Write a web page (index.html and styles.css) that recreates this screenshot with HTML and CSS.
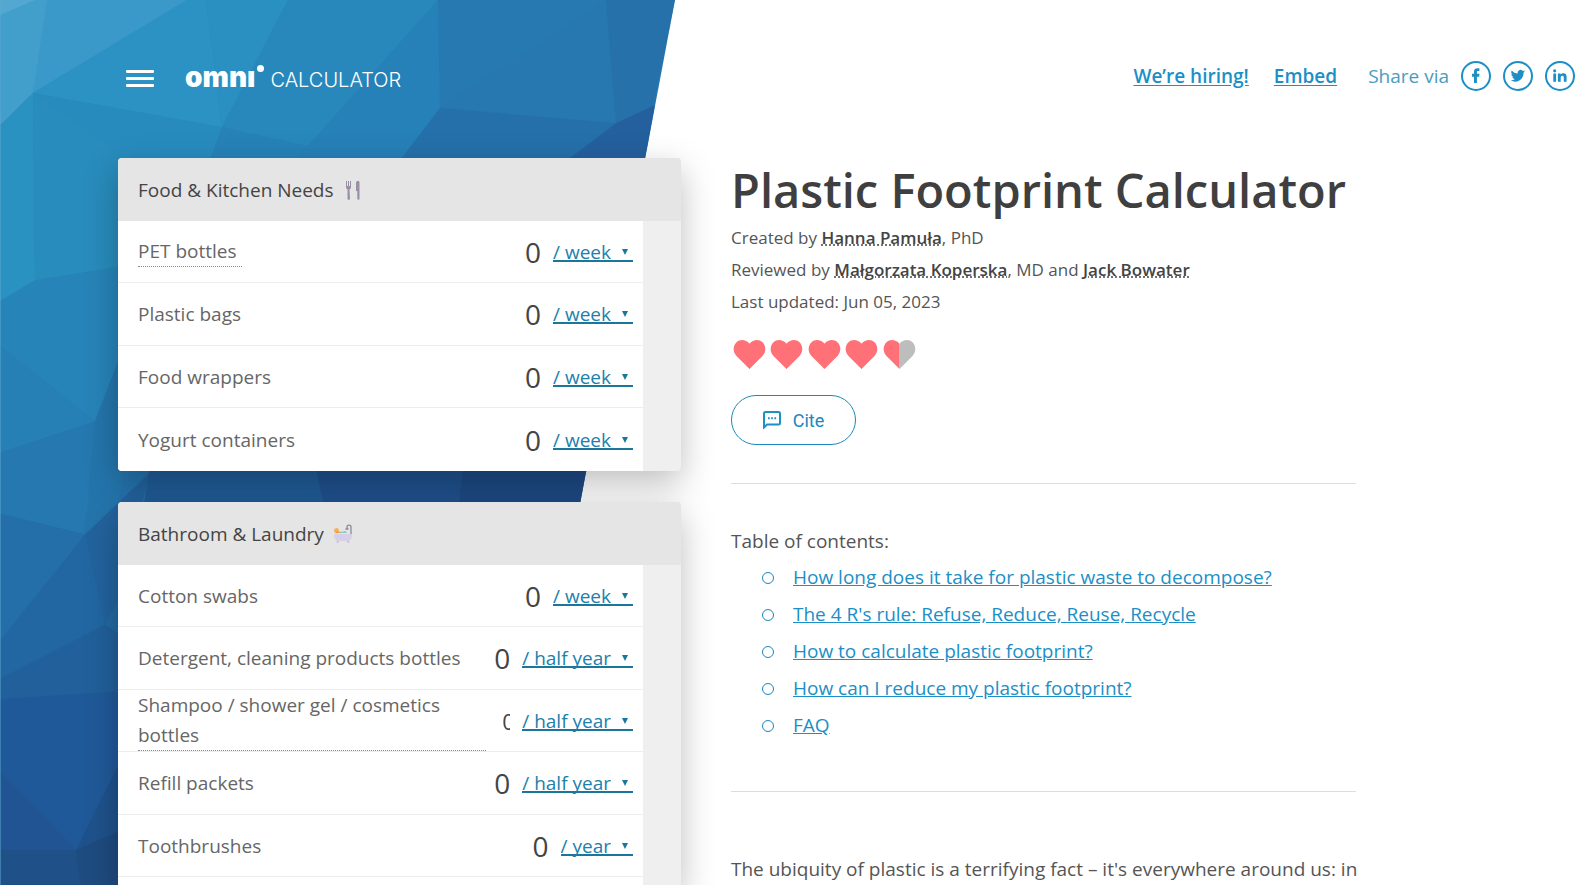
FILE: index.html
```html
<!DOCTYPE html>
<html lang="en">

<head>
  <meta charset="utf-8" />
  <meta name="viewport" content="width=device-width, initial-scale=1" />
  <title>Plastic Footprint Calculator</title>
  <link rel="stylesheet" href="styles.css">
</head>

<body>
  <svg class="backdrop" viewBox="0 0 675 885" preserveAspectRatio="none" aria-hidden="true">
    <defs>
      <linearGradient id="sky" x1="0" y1="0" x2="0.5" y2="1">
        <stop offset="0" stop-color="#2b93c2" />
        <stop offset="0.45" stop-color="#2577b0" />
        <stop offset="1" stop-color="#1f4c83" />
      </linearGradient>
      <clipPath id="slope"><path d="M0 0H675L508 885H0Z" /></clipPath>
    </defs>
    <g clip-path="url(#slope)">
      <rect width="675" height="885" fill="url(#sky)" />
      <path fill="#3a99c9" d="M0 0H187L33 93L0 125Z" />
      <path fill="#429fcc" d="M0 0H47L33 93L0 125Z" />
      <path fill="#52a8d1" d="M0 0H35L0 15Z" />
      <path fill="#2b92c3" d="M187 0H206L222 127L33 93Z" />
      <path fill="#2990c1" d="M206 0H288L222 127Z" />
      <path fill="#2888bb" d="M288 0H438L308 146L222 127Z" />
      <path fill="#2681b8" d="M438 0L440 108L400 160H298L308 146Z" />
      <path fill="#2779b2" d="M438 0H606L440 108Z" />
      <path fill="#2777b0" d="M606 0L616 123L440 108Z" />
      <path fill="#2671aa" d="M606 0H675L652 110L616 123Z" />
      <path fill="#2570aa" d="M440 108L616 123L567 160H400Z" />
      <path fill="#24609e" d="M616 123L655 105L645 160H567Z" />
      <path fill="#288bbe" d="M222 127L33 93L118 160H210Z" />
      <path fill="#2682b7" d="M222 127L308 146L298 160H210Z" />
      <path fill="#2a92c1" d="M0 125L33 93L35 280L0 301Z" />
      <path fill="#288cbc" d="M33 93L130 160V265L35 280Z" />
      <path fill="#2784b8" d="M35 280L130 265V330L95 421L0 345V301Z" />
      <path fill="#2780b5" d="M0 345L95 421L0 452Z" />
      <path fill="#2475ac" d="M95 421L130 330V430L118 507L85 534Z" />
      <path fill="#2578b0" d="M0 452L95 421L85 534L0 513Z" />
      <path fill="#246fa9" d="M0 513L85 534L0 640Z" />
      <path fill="#2267a2" d="M85 534L105 624L0 678V640Z" />
      <path fill="#22639e" d="M85 534L150 472L118 600L105 624Z" />
      <path fill="#21609b" d="M0 678L105 624L130 640V690L0 698Z" />
      <path fill="#205999" d="M0 698L130 690V755L76 849L0 770Z" />
      <path fill="#205493" d="M0 770L76 849H0Z" />
      <path fill="#1f528c" d="M76 849L130 740V825Z" />
      <path fill="#1f5087" d="M0 849H76L80 885H0Z" />
      <path fill="#1e4b80" d="M76 849L130 825V885H80Z" />
      <path fill="#205c98" d="M150 465H315L325 510H143Z" />
      <path fill="#1f518d" d="M315 465H463L458 510H325Z" />
      <path fill="#1e4a84" d="M463 465H590L580 510H458Z" />
      <path stroke="#5fa7d0" d="M0 0V885" />
    </g>
  </svg>

  <header class="top">
    <div class="brand">
      <button type="button" class="menu" aria-label="Menu"><span></span><span></span><span></span></button>
      <a href="#" class="logo" aria-label="Omni Calculator">
        <span class="omni">omnı</span><i class="dot"></i><span class="calc">CALCULATOR</span>
      </a>
    </div>
    <nav class="links">
      <a href="#" class="strong">We’re hiring!</a>
      <a href="#" class="strong">Embed</a>
      <div class="share">
        <span>Share via</span>
        <a href="#" aria-label="Facebook">
          <svg viewBox="0 0 30 30"><circle cx="15" cy="15" r="14" /><path d="M13 22v-6.300H11v-2.900h2v-1.900c0-2.500 1.400-3.600 3.500-3.600.9 0 1.700.1 1.900.1v2.600h-1.300c-1 0-1.200.5-1.200 1.200v1.600h2.600l-.4 2.900h-2.200V22z" /></svg>
        </a>
        <a href="#" aria-label="Twitter">
          <svg viewBox="0 0 30 30"><circle cx="15" cy="15" r="14" /><path d="M22 10.300a6 6 0 0 1-1.700.5 3 3 0 0 0 1.300-1.600 6 6 0 0 1-1.900.7 2.900 2.900 0 0 0-5 2.700 8.300 8.300 0 0 1-6-3.100 2.900 2.900 0 0 0 .9 3.900 3 3 0 0 1-1.300-.4 2.900 2.900 0 0 0 2.300 2.900 3 3 0 0 1-1.300.1 2.900 2.900 0 0 0 2.700 2A5.900 5.900 0 0 1 7.700 19.200 8.300 8.300 0 0 0 20.500 11.800 6 6 0 0 0 22 10.300z" /></svg>
        </a>
        <a href="#" aria-label="LinkedIn">
          <svg viewBox="0 0 30 30"><circle cx="15" cy="15" r="14" /><path d="M8.300 12.500h2.800V20.800H8.300zM9.700 8.200a1.600 1.600 0 1 1 0 3.200 1.600 1.600 0 0 1 0-3.200zM12.900 12.500h2.700v1.200c.5-.8 1.400-1.400 2.700-1.400 2.600 0 3.300 1.600 3.300 4v4.500h-2.800v-4.100c0-1.100-.2-2-1.400-2-1.300 0-1.700.9-1.700 2.100v4h-2.800z" /></svg>
        </a>
      </div>
    </nav>
  </header>

  <main class="main">
    <form class="calculator">
      <section class="card">
        <h2>Food &amp; Kitchen Needs
          <svg class="emoji" viewBox="0 0 20 20" fill="#9a8fa3"><path d="M3 1h1v5h1V1h1v5h1V1h1v6c0 1-.5 2-1.500 2.300L7 19c0 1-2.500 1-2.500 0L4.500 9.300C3.500 9 3 8 3 7zM13 19V3c0-1.500 1-2.200 2-2.200s1.500.7 1.500 2.200v16c0 1-2 1-2.200 0v-8H13z" /></svg>
        </h2>
        <div class="rows">
          <div class="row">
            <label for="pet" class="hint">PET bottles</label>
            <input id="pet" class="value" value="0" />
            <span class="unit"><select aria-label="PET bottles unit"><option>/ week</option><option>/ month</option><option>/ year</option></select></span>
          </div>
          <div class="row">
            <label for="bags">Plastic bags</label>
            <input id="bags" class="value" value="0" />
            <span class="unit"><select aria-label="Plastic bags unit"><option>/ week</option><option>/ month</option><option>/ year</option></select></span>
          </div>
          <div class="row">
            <label for="wrappers">Food wrappers</label>
            <input id="wrappers" class="value" value="0" />
            <span class="unit"><select aria-label="Food wrappers unit"><option>/ week</option><option>/ month</option><option>/ year</option></select></span>
          </div>
          <div class="row">
            <label for="yogurt">Yogurt containers</label>
            <input id="yogurt" class="value" value="0" />
            <span class="unit"><select aria-label="Yogurt containers unit"><option>/ week</option><option>/ month</option><option>/ year</option></select></span>
          </div>
        </div>
      </section>

      <section class="card last">
        <h2>Bathroom &amp; Laundry
          <svg class="emoji" viewBox="0 0 20 20"><path fill="#d7cfe6" d="M1 10h18c0 4-1 6-3 7H4c-2-1-3-3-3-7z" /><path fill="#c8bfda" d="M4 17h2l-1 2H3.500zM14 17h2l.5 2H15z" /><path fill="#8fc9c4" d="M6 8.500c2-2 3 0 4.500-1s2.500-.5 3.500 1.500H6z" /><circle cx="3.500" cy="6.500" r="2.500" fill="#f2b25c" /><path fill="#e89a45" d="M4 7l4 2H2z" /><path fill="none" stroke="#8d8894" stroke-width="1.300" d="M18 10V3c0-2.500-4-2.500-4 0v1.500M12.500 5h3" /></svg>
        </h2>
        <div class="rows">
          <div class="row">
            <label for="swabs">Cotton swabs</label>
            <input id="swabs" class="value" value="0" />
            <span class="unit"><select aria-label="Cotton swabs unit"><option>/ week</option><option>/ month</option><option>/ year</option></select></span>
          </div>
          <div class="row">
            <label for="detergent">Detergent, cleaning products bottles</label>
            <input id="detergent" class="value" value="0" />
            <span class="unit"><select aria-label="Detergent unit"><option>/ half year</option><option>/ month</option><option>/ year</option></select></span>
          </div>
          <div class="row">
            <label for="shampoo" class="hint wide">Shampoo / shower gel / cosmetics bottles</label>
            <input id="shampoo" class="value squeezed" value="0" />
            <span class="unit"><select aria-label="Shampoo unit"><option>/ half year</option><option>/ month</option><option>/ year</option></select></span>
          </div>
          <div class="row">
            <label for="refill">Refill packets</label>
            <input id="refill" class="value" value="0" />
            <span class="unit"><select aria-label="Refill packets unit"><option>/ half year</option><option>/ month</option><option>/ year</option></select></span>
          </div>
          <div class="row">
            <label for="brushes">Toothbrushes</label>
            <input id="brushes" class="value" value="0" />
            <span class="unit"><select aria-label="Toothbrushes unit"><option>/ year</option><option>/ month</option><option>/ week</option></select></span>
          </div>
        </div>
      </section>
    </form>

    <article class="article">
      <h1>Plastic Footprint Calculator</h1>
      <div class="meta">
        <div>Created by <a href="#">Hanna Pamuła</a>, PhD</div>
        <div>Reviewed by <a href="#">Małgorzata Koperska</a>, MD and <a href="#">Jack Bowater</a></div>
        <div>Last updated: Jun 05, 2023</div>
      </div>
      <svg class="hearts" viewBox="0 0 187 32" role="img" aria-label="Rating 4.5 of 5">
        <defs>
          <linearGradient id="half"><stop offset="0.5" stop-color="#ff7077" /><stop offset="0.5" stop-color="#bdbdbd" /></linearGradient>
          <path id="heart" d="M18.500 31L5.500 18C1.500 14 2 7.500 5.500 4.300 9 .8 15 1.400 18.500 5.800 22 1.400 28 .8 31.500 4.300 35 7.500 35.500 14 31.500 18z" />
        </defs>
        <g fill="#ff7077"><use href="#heart" /><use href="#heart" x="37" /><use href="#heart" x="75" /><use href="#heart" x="112" /></g>
        <use href="#heart" x="150" fill="url(#half)" />
      </svg>
      <button type="button" class="cite">
        <svg viewBox="0 0 18 18"><path d="M1 16.500V2.500Q1 1 2.500 1H15.500Q17 1 17 2.500V12Q17 13.500 15.500 13.500H4z" /><path class="dots" d="M5 7.300h1.700M8.200 7.300h1.700M11.400 7.300h1.700" /></svg>
        Cite
      </button>
      <nav class="toc">
        <p>Table of contents:</p>
        <ul>
          <li><a href="#">How long does it take for plastic waste to decompose?</a></li>
          <li><a href="#">The 4 R's rule: Refuse, Reduce, Reuse, Recycle</a></li>
          <li><a href="#">How to calculate plastic footprint?</a></li>
          <li><a href="#">How can I reduce my plastic footprint?</a></li>
          <li><a href="#">FAQ</a></li>
        </ul>
      </nav>
      <p class="intro">The ubiquity of plastic is a terrifying fact – it's everywhere around us: in</p>
    </article>
  </main>
</body>

</html>
```
FILE: styles.css
```css
* {
  box-sizing: border-box;
}

body {
  margin: 0;
  min-height: 100vh;
  display: flex;
  flex-direction: column;
  position: relative;
  background: #fff;
  color: #555;
  font-family: "Open Sans", "Noto Sans", sans-serif;
  font-size: 19px;
}

h1, h2, p, ul {
  margin: 0;
  padding: 0;
}

a {
  color: #1b8fc6;
}

.backdrop {
  position: absolute;
  left: 0;
  top: 0;
  width: 675px;
  height: 100%;
  z-index: -1;
}

/* header */
.top {
  display: flex;
  justify-content: space-between;
  align-items: center;
  height: 158px;
  padding: 0 13px 6px 126px;
}

.brand, .logo, .links, .share {
  display: flex;
  align-items: center;
}

.brand {
  gap: 31px;
  padding-top: 4px;
}

.menu {
  display: flex;
  flex-direction: column;
  gap: 4px;
  width: 28px;
  padding: 0;
  border: 0;
  background: none;
}

.menu span {
  height: 3px;
  border-radius: 1px;
  background: #fff;
}

.logo {
  align-items: baseline;
  color: #fff;
  text-decoration: none;
  line-height: 30px;
  font-family: Inter, sans-serif;
}

.omni {
  font-size: 28px;
  font-weight: 900;
}

.dot {
  align-self: flex-start;
  width: 7px;
  height: 7px;
  margin: 3px 6px 0 2px;
  border-radius: 50%;
  background: #fff;
}

.calc {
  font-size: 20px;
  font-weight: 300;
}

.links {
  gap: 25px;
}

.strong {
  font-weight: 600;
  text-underline-offset: 2px;
}

.share {
  gap: 12px;
  margin-left: 6px;
  color: #4a9cc0;
}

.share svg {
  display: block;
  width: 30px;
  height: 30px;
  fill: #1b8fc6;
}

.share circle {
  fill: none;
  stroke: #1b8fc6;
  stroke-width: 2;
}

/* calculator */
.main {
  flex: 1;
  display: grid;
  grid-template-columns: minmax(0, 563fr) minmax(0, 625fr);
  gap: 50px;
  padding: 0 232px 0 118px;
}

.calculator {
  display: flex;
  flex-direction: column;
  gap: 31px;
}

.card {
  background: #efefef;
  border-radius: 4px;
  box-shadow: 0 12px 34px rgba(0, 0, 0, 0.26);
}

.last {
  flex: 1;
  display: flex;
  flex-direction: column;
  border-radius: 4px 4px 0 0;
}

.card h2 {
  display: flex;
  align-items: center;
  gap: 9px;
  height: 63px;
  padding-left: 20px;
  border-radius: 4px 4px 0 0;
  background: #e5e5e5;
  color: #444;
  font-size: 19px;
  font-weight: 400;
}

.emoji {
  width: 20px;
  height: 20px;
}

.rows {
  flex: 1;
  margin-right: 38px;
  background: #fff;
  border-radius: 0 0 0 4px;
}

.row {
  display: flex;
  align-items: center;
  height: 62px;
  padding: 0 10px 0 20px;
  border-bottom: 1px solid #ededed;
}

.row:nth-child(even) {
  height: 63px;
}

.card:first-child .row:last-child {
  border-bottom: 0;
}

.row label {
  color: #666;
}

.row .hint {
  padding-right: 5px;
  border-bottom: 1px dotted #888;
  line-height: 30px;
}

.row .wide {
  width: 348px;
}

.value {
  width: 17px;
  margin: 0 12px 0 auto;
  padding: 0;
  border: 0;
  background: none;
  color: #444;
  font: 28px "Open Sans", sans-serif;
  text-align: right;
}

.squeezed {
  width: 8px;
  font-size: 22px;
  text-align: left;
}

.unit {
  position: relative;
}

.unit select {
  display: block;
  field-sizing: content;
  appearance: none;
  padding: 0 22px 0 0;
  border: 0;
  border-radius: 0;
  background: linear-gradient(#1a7799, #1a7799) 0 22px / 100% 2px no-repeat;
  color: #2080ab;
  font: 19px/28px "Open Sans", sans-serif;
}

.unit::after {
  content: "";
  position: absolute;
  right: 5px;
  top: 11px;
  border: 3px solid transparent;
  border-top: 6px solid #1a7799;
  border-bottom: 0;
  pointer-events: none;
}

/* article */
.article h1 {
  color: #3f3f3f;
  font-size: 47px;
  font-weight: 600;
  line-height: 64px;
  white-space: nowrap;
}

.meta {
  font-size: 17px;
  line-height: 32px;
}

.meta a {
  color: #444;
  font-weight: 600;
  text-decoration: underline dotted;
}

.hearts {
  display: block;
  width: 187px;
  height: 32px;
  margin-top: 20px;
}

.cite {
  display: flex;
  align-items: center;
  justify-content: center;
  gap: 12px;
  width: 125px;
  height: 50px;
  margin-top: 25px;
  border: 1px solid #1b87bd;
  border-radius: 25px;
  background: #fff;
  color: #1b87bd;
  font: 18px Roboto, sans-serif;
}

.cite svg {
  width: 18px;
  height: 18px;
  fill: none;
  stroke: #1b8fc6;
  stroke-width: 2;
}

.toc {
  margin: 38px 0 60px;
  padding: 39px 0 47px;
  border: solid #ddd;
  border-width: 1px 0;
  line-height: 37px;
}

.toc p {
  line-height: 36px;
}

.toc ul {
  list-style: none;
}

.toc li {
  display: flex;
  align-items: center;
  gap: 19px;
  padding-left: 31px;
}

.toc li::before {
  content: "";
  width: 10px;
  height: 10px;
  border: 1px solid #1b87bd;
  border-radius: 50%;
}

.intro {
  line-height: 34px;
  white-space: nowrap;
}
```
